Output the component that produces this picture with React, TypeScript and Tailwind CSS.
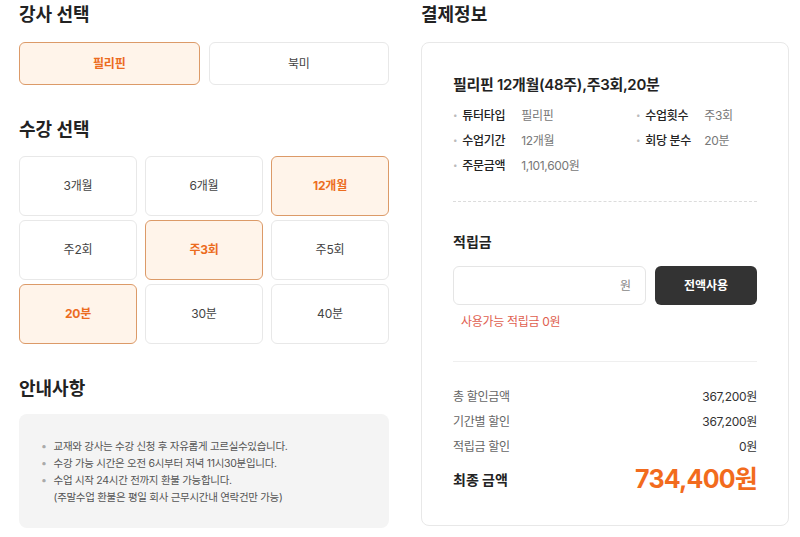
import * as React from "react";

// Latin and digits in Inter, Hangul in Noto Sans CJK KR (close to Pretendard)
const font = { fontFamily: 'Inter, "Noto Sans CJK KR", "Noto Sans", sans-serif' };

function OptionButton({ label, selected, className = "" }: { label: string; selected?: boolean; className?: string }) {
  return (
    <button
      className={
        "flex items-center justify-center rounded-md border text-[12px] tracking-[-0.2px] " +
        (selected
          ? "border-[#dc9a68] bg-[#fff4ea] font-bold text-[#ec6c1f]"
          : "border-[#e8e8e8] bg-white text-[#444]") +
        " " +
        className
      }
    >
      {label}
    </button>
  );
}

function InfoItem({ label, value }: { label: string; value: string }) {
  return (
    <div className="flex items-center text-[12px] tracking-[-0.3px]">
      <span className="mr-[5px] text-[8px] text-[#bbb]">•</span>
      <span className="w-[59px] font-medium text-[#222]">{label}</span>
      <span className="text-[#777]">{value}</span>
    </div>
  );
}

export default function App() {
  const [selected] = React.useState({ tutor: "필리핀", period: "12개월", freq: "주3회", mins: "20분" });
  const grid = ["3개월", "6개월", "12개월", "주2회", "주3회", "주5회", "20분", "30분", "40분"];
  const isSel = (v: string) => v === selected.period || v === selected.freq || v === selected.mins;

  return (
    <div className="flex h-[537px] w-[800px] gap-[32px] bg-white pl-[19px]" style={font}>
      {/* Left column */}
      <div className="w-[370px] pt-[3px]">
        <h2 className="text-[18px] font-bold leading-[24px] text-[#222]">강사 선택</h2>
        <div className="mt-[15px] flex gap-[9px]">
          <OptionButton label="필리핀" selected className="h-[43px] flex-1" />
          <OptionButton label="북미" className="h-[43px] flex-1" />
        </div>

        <h2 className="mt-[33px] text-[18px] font-bold leading-[24px] text-[#222]">수강 선택</h2>
        <div className="mt-[14px] grid grid-cols-3 gap-x-[8px] gap-y-[4px]">
          {grid.map((g) => (
            <OptionButton key={g} label={g} selected={isSel(g)} className="h-[60px]" />
          ))}
        </div>

        <h2 className="mt-[33px] text-[18px] font-bold leading-[24px] text-[#222]">안내사항</h2>
        <div className="mt-[13px] rounded-lg bg-[#f4f4f4] px-[22px] pb-[22px] pt-[24px] text-[10.5px] leading-[17px] tracking-[-0.3px] text-[#555]">
          <ul>
            <li className="flex"><span className="mr-[7px] text-[#aaa]">•</span>교재와 강사는 수강 신청 후 자유롭게 고르실수있습니다.</li>
            <li className="flex"><span className="mr-[7px] text-[#aaa]">•</span>수강 가능 시간은 오전 6시부터 저녁 11시30분입니다.</li>
            <li className="flex">
              <span className="mr-[7px] text-[#aaa]">•</span>
              <span>
                수업 시작 24시간 전까지 환불 가능합니다.
                <br />
                (주말수업 환불은 평일 회사 근무시간내 연락건만 가능)
              </span>
            </li>
          </ul>
        </div>
      </div>

      {/* Right column */}
      <div className="w-[368px] pt-[3px]">
        <h2 className="text-[18px] font-bold leading-[24px] text-[#222]">결제정보</h2>
        <div className="mt-[15px] h-[484px] rounded-lg border border-[#e8e8e8] px-[31px] pt-[30px]">
          <h3 className="text-[15px] font-semibold leading-[24px] tracking-[-0.3px] text-[#222]">필리핀 12개월(48주),주3회,20분</h3>
          <div className="mt-[9px] grid grid-cols-[183px_1fr] gap-y-[6px] leading-[19px]">
            <InfoItem label="튜터타입" value="필리핀" />
            <InfoItem label="수업횟수" value="주3회" />
            <InfoItem label="수업기간" value="12개월" />
            <InfoItem label="회당 분수" value=" 20분" />
            <InfoItem label="주문금액" value="1,101,600원" />
          </div>

          <div className="mt-[26px] border-t border-dashed border-[#dcdcdc]" />

          <h3 className="mt-[29px] text-[14px] font-bold leading-[22px] text-[#222]">적립금</h3>
          <div className="mt-[13px] flex gap-[9px]">
            <div className="flex h-[39px] w-[193px] items-center justify-end rounded-md border border-[#e5e5e5] pr-[14px] text-[12px] text-[#888]">
              원
            </div>
            <button className="h-[39px] w-[102px] rounded-md bg-[#333] text-[12px] font-bold text-white">전액사용</button>
          </div>
          <p className="mt-[8px] pl-[8px] text-[12px] leading-[18px] tracking-[-0.3px] text-[#e0604f]">사용가능 적립금 0원</p>

          <div className="mt-[30px] border-t border-[#efefef]" />

          <div className="mt-[25px] space-y-[6px] text-[12px] leading-[19px] tracking-[-0.3px] text-[#666]">
            <div className="flex justify-between">
              <span>총 할인금액</span>
              <span className="text-[#333]">367,200원</span>
            </div>
            <div className="flex justify-between">
              <span>기간별 할인</span>
              <span className="text-[#333]">367,200원</span>
            </div>
            <div className="flex justify-between">
              <span>적립금 할인</span>
              <span className="text-[#333]">0원</span>
            </div>
          </div>
          <div className="mt-[6px] flex items-center justify-between">
            <span className="text-[14px] font-bold text-[#222]">최종 금액</span>
            <span className="text-[25px] font-bold leading-[34px] tracking-[-0.8px] text-[#f26b1d]">734,400원</span>
          </div>
        </div>
      </div>
    </div>
  );
}
